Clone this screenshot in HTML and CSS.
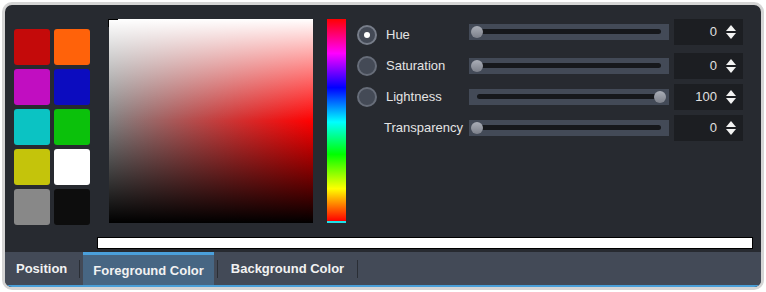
FILE: index.html
```html
<!DOCTYPE html>
<html lang="en">
<head>
    <meta charset="UTF-8">
    <title>Color Picker</title>
    <link rel="stylesheet" href="styles.css">
</head>
<body>
    <div class="panel">
        <div class="main">
            <div class="picker">
                <div class="swatches">
                    <div class="swatch red"></div>
                    <div class="swatch orange"></div>
                    <div class="swatch magenta"></div>
                    <div class="swatch blue"></div>
                    <div class="swatch cyan"></div>
                    <div class="swatch green"></div>
                    <div class="swatch yellow"></div>
                    <div class="swatch white"></div>
                    <div class="swatch gray"></div>
                    <div class="swatch black"></div>
                </div>
                <div class="sv-box">
                    <div class="sv-cursor"></div>
                </div>
                <div class="hue-bar"></div>
                <div class="controls">
                    <div class="row row-first">
                        <span class="radio checked"></span>
                        <span class="label">Hue</span>
                        <div class="slider"><div class="groove"></div><span class="thumb"></span></div>
                        <div class="number">0 <svg class="spin" width="10" height="14" viewBox="0 0 10 14"><polygon points="5,0 10,6 0,6"/><polygon points="0,8 10,8 5,14"/></svg></div>
                    </div>
                    <div class="row">
                        <span class="radio"></span>
                        <span class="label">Saturation</span>
                        <div class="slider"><div class="groove"></div><span class="thumb"></span></div>
                        <div class="number">0 <svg class="spin" width="10" height="14" viewBox="0 0 10 14"><polygon points="5,0 10,6 0,6"/><polygon points="0,8 10,8 5,14"/></svg></div>
                    </div>
                    <div class="row">
                        <span class="radio"></span>
                        <span class="label">Lightness</span>
                        <div class="slider"><div class="groove"></div><span class="thumb thumb-end"></span></div>
                        <div class="number">100 <svg class="spin" width="10" height="14" viewBox="0 0 10 14"><polygon points="5,0 10,6 0,6"/><polygon points="0,8 10,8 5,14"/></svg></div>
                    </div>
                    <div class="row">
                        <span class="label label-wide">Transparency</span>
                        <div class="slider"><div class="groove"></div><span class="thumb"></span></div>
                        <div class="number">0 <svg class="spin" width="10" height="14" viewBox="0 0 10 14"><polygon points="5,0 10,6 0,6"/><polygon points="0,8 10,8 5,14"/></svg></div>
                    </div>
                </div>
            </div>
            <div class="preview"></div>
        </div>
        <div class="tabs">
            <div class="tab first">Position</div>
            <span class="sep"></span>
            <div class="tab active">Foreground Color</div>
            <span class="sep"></span>
            <div class="tab">Background Color</div>
            <span class="sep"></span>
        </div>
    </div>
</body>
</html>
```

FILE: styles.css
```css
* {
    margin: 0;
    padding: 0;
    box-sizing: border-box;
}
body {
    font-family: 'Liberation Sans', Arial, sans-serif;
    background-color: #fff;
    width: 766px;
    height: 292px;
    overflow: hidden;
}
.panel {
    margin: 2px;
    border: 3px solid #d5d5d5;
    border-radius: 10px;
    background-color: #272a30;
    overflow: hidden;
}
.main {
    height: 247px;
    padding: 14px 0 0 9px;
}
.picker {
    display: flex;
    align-items: flex-start;
}
.swatches {
    display: grid;
    grid-template-columns: 36px 36px;
    grid-auto-rows: 36px;
    gap: 4px;
    margin-top: 10px;
}
.swatch {
    border-radius: 3px;
}
.red { background-color: #c40a0a; }
.orange { background-color: #ff620a; }
.magenta { background-color: #c10ec1; }
.blue { background-color: #0c0cbf; }
.cyan { background-color: #0bc3c3; }
.green { background-color: #0bc10b; }
.yellow { background-color: #c4c40b; }
.white { background-color: #ffffff; }
.gray { background-color: #888888; }
.black { background-color: #0d0d0d; }
.sv-box {
    position: relative;
    width: 204px;
    height: 204px;
    margin-left: 19px;
    background: linear-gradient(to bottom, #fff, rgba(255,255,255,0) 50%, rgba(0,0,0,0) 50%, #000),
                linear-gradient(to right, #808080, #f00);
}
.sv-cursor {
    position: absolute;
    left: -1px;
    top: 0;
    width: 10px;
    height: 8px;
    border-left: 1px solid #000;
    border-top: 1px solid #000;
}
.hue-bar {
    width: 19px;
    height: 204px;
    margin-left: 14px;
    border-bottom: 2px solid #1ee0e8;
    background: linear-gradient(to bottom, #f00, #f0f 17%, #00f 34%, #0ff 51%, #0f0 67%, #ff0 84%, #f00);
}
.controls {
    margin-left: 11px;
}
.row {
    display: flex;
    align-items: center;
    height: 31px;
}
.row-first .slider,
.row-first .number {
    margin-bottom: 6px;
}
.radio {
    width: 20px;
    height: 20px;
    border-radius: 50%;
    border: 2px solid #676d79;
    background-color: #444a56;
    margin-right: 9px;
    display: flex;
    align-items: center;
    justify-content: center;
}
.radio.checked {
    border-color: #777d89;
}
.radio.checked::after {
    content: '';
    width: 6px;
    height: 6px;
    border-radius: 50%;
    background-color: #fff;
}
.label {
    width: 83px;
    font-size: 13px;
    color: #e4e4e4;
}
.label-wide {
    width: 112px;
    padding-left: 27px;
}
.slider {
    position: relative;
    width: 200px;
    height: 16px;
    background-color: #434a57;
    padding-top: 5px;
}
.groove {
    height: 5px;
    margin: 0 8px;
    border-radius: 3px;
    background-color: #16181c;
}
.thumb {
    position: absolute;
    top: 2px;
    left: 2px;
    width: 12px;
    height: 12px;
    border-radius: 50%;
    background: linear-gradient(#aaaeb7, #7c808a);
}
.thumb-end {
    left: auto;
    right: 3px;
}
.number {
    display: flex;
    align-items: center;
    justify-content: flex-end;
    width: 69px;
    height: 26px;
    margin-left: 5px;
    padding-right: 7px;
    background-color: #1c1e22;
    font-size: 13px;
    color: #e0e0e0;
}
.spin {
    margin-left: 9px;
    fill: #f2f2f2;
}
.preview {
    width: 656px;
    height: 12px;
    margin: 12px 0 0 83px;
    background-color: #fff;
    border: 1px solid #000;
}
.tabs {
    display: flex;
    align-items: center;
    height: 35px;
    padding-left: 1px;
    background-color: #434a57;
    border-bottom: 2px solid #4a9fd8;
}
.tab {
    display: flex;
    align-items: center;
    height: 100%;
    padding: 0 10px;
    font-size: 13px;
    font-weight: bold;
    color: #f2f2f2;
}
.tab.first {
    padding-right: 9px;
}
.tab.active {
    background-color: #476683;
    border-top: 3px solid #4aa0dc;
}
.sep {
    width: 1px;
    height: 18px;
    margin: 0 3px;
    background-color: #2a2e35;
}
```
